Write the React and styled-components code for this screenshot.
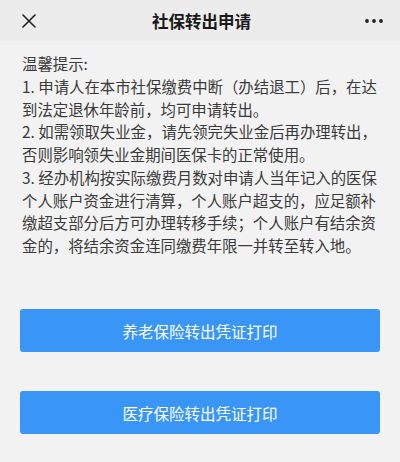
import React from "react";
import styled, { createGlobalStyle } from "styled-components";

const Global = createGlobalStyle`
  html, body { margin: 0; padding: 0; background: #f2f2f2; }
  body { font-family: "Noto Sans CJK SC", "Noto Sans", sans-serif; }
  * { box-sizing: border-box; }
`;

const Page = styled.div`
  width: 400px;
  height: 462px;
  background: #f2f2f2;
  display: flex;
  flex-direction: column;
  overflow: hidden;
`;

const Header = styled.header`
  height: 41px;
  background: #ececec;
  display: flex;
  align-items: center;
  justify-content: space-between;
  padding: 0 16px 0 19px;
  flex-shrink: 0;
`;

const IconButton = styled.div`
  width: 20px;
  height: 20px;
  display: flex;
  align-items: center;
  justify-content: center;
`;

const Title = styled.h1`
  margin: 0;
  font-size: 16.5px;
  font-weight: 600;
  color: #1a1a1a;
  letter-spacing: 0;
`;

const Notice = styled.div`
  padding: 11px 18px 0 22px;
  font-size: 15.4px;
  line-height: 22.75px;
  color: #3a3a3a;
`;

const Para = styled.p`
  margin: 0;
`;

const Buttons = styled.div`
  display: flex;
  flex-direction: column;
  gap: 39px;
  padding: 52px 20px 0 20px;
`;

const PrintButton = styled.button`
  height: 43px;
  border: none;
  border-radius: 3px;
  background: #3a96f6;
  color: #ffffff;
  font-family: "Noto Sans CJK SC", "Noto Sans", sans-serif;
  font-size: 15.5px;
  display: flex;
  align-items: center;
  justify-content: center;
  padding: 0;
  padding-top: 2px;
`;

export default function App() {
  return (
    <Page>
      <Global />
      <Header>
        <IconButton>
          <svg width="14" height="14" viewBox="0 0 14 14">
            <path d="M1 1 L13 13 M13 1 L1 13" stroke="#222" strokeWidth="1.6" strokeLinecap="round" />
          </svg>
        </IconButton>
        <Title>社保转出申请</Title>
        <IconButton>
          <svg width="20" height="6" viewBox="0 0 20 6">
            <circle cx="3" cy="3" r="1.9" fill="#222" />
            <circle cx="10" cy="3" r="1.9" fill="#222" />
            <circle cx="17" cy="3" r="1.9" fill="#222" />
          </svg>
        </IconButton>
      </Header>
      <Notice>
        <Para>温馨提示:</Para>
        <Para>1. 申请人在本市社保缴费中断（办结退工）后，在达到法定退休年龄前，均可申请转出。</Para>
        <Para>2. 如需领取失业金，请先领完失业金后再办理转出，否则影响领失业金期间医保卡的正常使用。</Para>
        <Para>3. 经办机构按实际缴费月数对申请人当年记入的医保个人账户资金进行清算，个人账户超支的，应足额补缴超支部分后方可办理转移手续；个人账户有结余资金的，将结余资金连同缴费年限一并转至转入地。</Para>
      </Notice>
      <Buttons>
        <PrintButton>养老保险转出凭证打印</PrintButton>
        <PrintButton>医疗保险转出凭证打印</PrintButton>
      </Buttons>
    </Page>
  );
}
